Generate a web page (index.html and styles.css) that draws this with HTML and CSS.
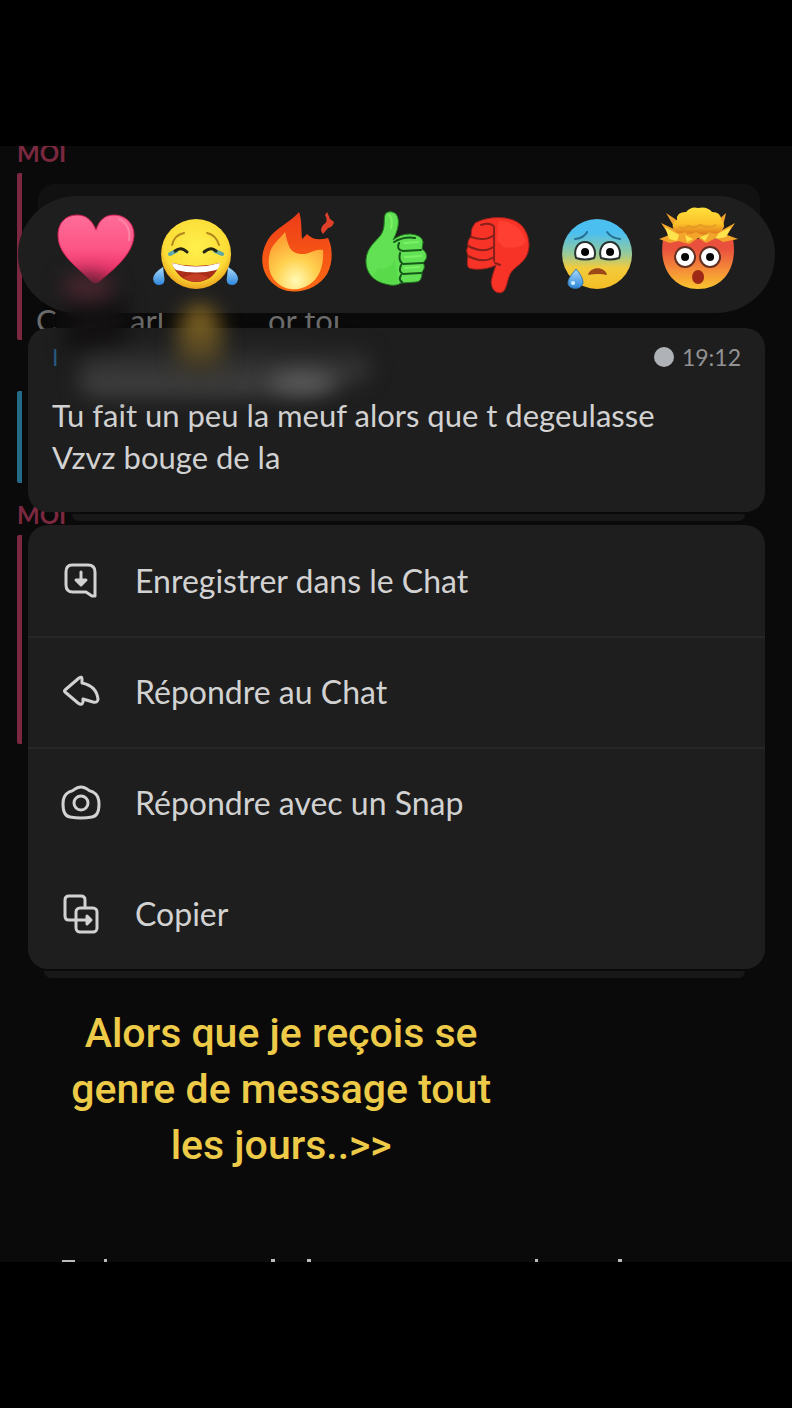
FILE: index.html
```html
<!DOCTYPE html>
<html lang="fr">
<head>
    <meta charset="UTF-8">
    <meta name="viewport" content="width=device-width, initial-scale=1">
    <title>Chat</title>
    <link rel="stylesheet" href="styles.css">
</head>
<body>
<main class="screen">
    <!-- conversation behind the menu -->
    <div class="thread">
        <h2 class="author">MOI</h2>
        <div class="rail rail_first">
            <p class="old_text"><span>C</span><span>arl</span><span>or toi</span></p>
        </div>
        <div class="rail rail_friend"></div>
        <h2 class="author">MOI</h2>
        <div class="rail rail_last"></div>
    </div>

    <div class="overlay">
        <div class="reactions">
            <button type="button" aria-label="Coeur">
                <svg viewBox="0 0 100 100">
                    <defs>
                        <linearGradient id="heart" x1="0" y1="0" x2="0" y2="1">
                            <stop offset="0" stop-color="#ff6c98"/>
                            <stop offset=".5" stop-color="#fb5585"/>
                            <stop offset="1" stop-color="#ee225f"/>
                        </linearGradient>
                    </defs>
                    <path fill="url(#heart)" stroke="#cf2357" d="M50 26C45 14 38 11 31 11C18 11 11 21 12 33C13 51 30 62 44 76Q49 82 55 76C69 64 87 50 88 31C88 19 79 11 68 11C59 11 53 16 50 26Z"/>
                    <path fill="none" stroke="#ff83a5" stroke-width="2" stroke-linecap="round" d="M73 15Q85 21 83 36"/>
                </svg>
            </button>
            <button type="button" aria-label="Mort de rire">
                <svg viewBox="0 0 100 100">
                    <defs>
                        <radialGradient id="joy" cx=".5" cy=".4" r=".6">
                            <stop offset="0" stop-color="#fff04d"/>
                            <stop offset=".75" stop-color="#fbdc36"/>
                            <stop offset="1" stop-color="#eba31e"/>
                        </radialGradient>
                        <linearGradient id="tear" x1="0" y1="0" x2="0" y2="1">
                            <stop offset="0" stop-color="#a9dcfa"/>
                            <stop offset="1" stop-color="#2e86dc"/>
                        </linearGradient>
                    </defs>
                    <circle cx="50" cy="50" r="35" fill="url(#joy)"/>
                    <path fill="none" stroke="#b3881d" stroke-width="2" stroke-linecap="round" d="M26 41Q28 31 38 29M61 29Q70 31 73 41"/>
                    <path fill="none" stroke="#62a9a6" stroke-width="4" stroke-linecap="round" d="M24 50L30 47M76 50L69 47"/>
                    <path fill="none" stroke="#252514" stroke-width="3" stroke-linecap="round" d="M29 47Q35 42 41 48M58 48Q65 42 70 47"/>
                    <path fill="#a92d18" d="M26 59Q50 65 74 59C71 70 62 78 50 78S29 70 26 59Z"/>
                    <path fill="#fff" d="M26 59Q50 66 74 59Q73 65 70 66Q50 71 30 66Q27 64 26 59Z"/>
                    <path fill="#c33e25" d="M37 74Q50 66 63 74Q50 81 37 74Z"/>
                    <path fill="url(#tear)" d="M17 63Q7 69 7 75Q8 81 13 81Q20 81 18 72ZM82 63Q92 69 92 75Q91 81 86 81Q79 81 81 72Z"/>
                </svg>
            </button>
            <button type="button" aria-label="Feu">
                <svg viewBox="0 0 100 100">
                    <defs>
                        <linearGradient id="fire" x1="0" y1="0" x2="0" y2="1">
                            <stop offset="0" stop-color="#ed3b19"/>
                            <stop offset="1" stop-color="#fc6b12"/>
                        </linearGradient>
                        <radialGradient id="flame" cx=".5" cy=".85" r=".75">
                            <stop offset="0" stop-color="#fffab5"/>
                            <stop offset=".5" stop-color="#ffd251"/>
                            <stop offset="1" stop-color="#fda334"/>
                        </radialGradient>
                    </defs>
                    <path fill="url(#fire)" d="M53 8C42 20 30 24 23 34C11 52 15 74 33 84C49 92 71 86 81 70C88 57 86 42 82 34Q68 38 61 30L56 35C55 27 56 16 53 8Z"/>
                    <path fill="url(#flame)" d="M39 28C42 42 44 49 54 50C64 51 68 44 77 46C78 66 71 81 52 85C33 87 20 72 23 53C24 41 33 36 39 28Z"/>
                    <path fill="#e0402a" d="M81 8L84 15L88 18Q87 23 82 24L77 30Q73 26 77 21Q83 18 79 11Z"/>
                </svg>
            </button>
            <button type="button" aria-label="Pouce en haut">
                <svg viewBox="0 0 100 100">
                    <path fill="#61e153" stroke="#237c20" d="M40 9Q45 6 50 10C55 17 51 28 47 36Q54 30 64 30Q76 31 77 38Q76 44 76 45Q82 49 80 55L77 59Q80 63 76 68Q76 78 70 78L55 79Q49 83 40 80C25 77 19 66 20 55C21 44 28 39 34 32C41 23 36 14 40 9Z"/>
                    <path fill="#58da4b" d="M32 64Q43 67 49 56L52 79Q37 83 27 72Z"/>
                    <path fill="none" stroke="#16571a" stroke-width="2" stroke-linecap="round" d="M48 38Q58 32 69 34M53 39Q50 46 57 47L75 46M54 49Q52 57 57 60L77 59M55 61Q52 68 57 70L75 69M55 71Q52 76 56 78"/>
                    <path fill="none" stroke="#7cf066" stroke-width="2" stroke-linecap="round" d="M43 11Q47 14 45 24M58 39L72 38M59 53L75 52M59 64L73 63"/>
                </svg>
            </button>
            <button type="button" aria-label="Pouce en bas">
                <svg viewBox="0 0 100 100">
                    <path fill="#f73327" stroke="#9e201b" d="M28 19C39 13 55 12 66 16C77 20 82 31 82 42C81 56 73 59 65 67C59 74 61 88 53 89Q45 89 44 78Q45 71 49 61C40 66 27 66 22 64Q19 62 21 52Q18 46 21 42Q20 36 24 33Q23 25 28 19Z"/>
                    <path fill="#ff3f31" d="M52 17Q72 17 79 37Q75 46 56 43L50 36Z"/>
                    <path fill="none" stroke="#86201b" stroke-width="2" stroke-linecap="round" d="M34 21Q44 18 47 23V57M24 33Q38 38 47 31M21 42Q37 50 46 43M21 52Q36 60 47 53M48 59L53 61"/>
                </svg>
            </button>
            <button type="button" aria-label="Triste">
                <svg viewBox="0 0 100 100">
                    <defs>
                        <linearGradient id="cold" x1="0" y1="0" x2="0" y2="1">
                            <stop offset=".2" stop-color="#4bbff0"/>
                            <stop offset=".5" stop-color="#98ca98"/>
                            <stop offset=".7" stop-color="#f2cb3c"/>
                            <stop offset="1" stop-color="#f5bd25"/>
                        </linearGradient>
                    </defs>
                    <circle cx="50" cy="50" r="35" fill="url(#cold)"/>
                    <path fill="none" stroke="#246f94" stroke-width="2" stroke-linecap="round" d="M28 35Q37 34 40 28M60 28Q64 34 73 35"/>
                    <g fill="#fff" stroke="#28332f" stroke-width="2">
                        <path d="M29 54C26 45 31 38 38 38S50 46 47 54Q38 57 29 54ZM54 54C51 45 56 38 63 38S75 46 72 54Q63 57 54 54Z"/>
                    </g>
                    <circle cx="38" cy="48" r="4" fill="#050505"/>
                    <circle cx="63" cy="48" r="4" fill="#050505"/>
                    <path fill="#9d4818" d="M41 71C43 62 58 62 60 71Q51 69 41 71Z"/>
                    <path fill="url(#tear)" stroke="#347cac" d="M29 65Q20 75 21 80C23 86 34 86 36 79Q36 73 29 65Z"/>
                    <circle cx="26" cy="79" r="2" fill="#d1f1ff"/>
                </svg>
            </button>
            <button type="button" aria-label="Choqué">
                <svg viewBox="0 0 100 100">
                    <defs>
                        <linearGradient id="hot" x1="0" y1="0" x2="0" y2="1">
                            <stop offset=".2" stop-color="#e9513d"/>
                            <stop offset=".6" stop-color="#f48a38"/>
                            <stop offset="1" stop-color="#fac52e"/>
                        </linearGradient>
                        <linearGradient id="blast" x1="0" y1="0" x2="0" y2="1">
                            <stop offset="0" stop-color="#ffe13b"/>
                            <stop offset=".6" stop-color="#fcc02a"/>
                            <stop offset="1" stop-color="#df7a1d"/>
                        </linearGradient>
                    </defs>
                    <path fill="url(#hot)" d="M16 35H86C91 65 75 85 51 85S11 65 16 35Z"/>
                    <path fill="#f3a42b" d="M12 35L22 31L14 19L29 26L19 9L34 19H68L79 9L75 26L88 19L80 31L91 35L76 38L69 34L59 39L51 34L42 40L31 37L23 39Z"/>
                    <path fill="#ffe34d" d="M18 23L32 31L30 37L22 35ZM84 23L72 29L68 35L79 33ZM38 31L46 35L40 38ZM62 30L58 37L53 33Z"/>
                    <path fill="url(#blast)" d="M28 27Q22 21 30 16Q29 8 39 8Q44 2 51 4Q60 2 65 8Q74 8 74 16Q80 22 74 27Q69 32 62 28Q56 33 49 28Q42 32 38 28Q32 31 28 27Z"/>
                    <path fill="none" stroke="#e79a22" stroke-width="2" d="M32 23Q37 26 41 22Q48 25 53 21Q62 25 69 21"/>
                    <circle cx="38" cy="53" r="10" fill="#fff" stroke="#622f21" stroke-width="2"/>
                    <circle cx="63" cy="53" r="10" fill="#fff" stroke="#622f21" stroke-width="2"/>
                    <circle cx="38" cy="53" r="4" fill="#070707"/>
                    <circle cx="63" cy="53" r="4" fill="#070707"/>
                    <ellipse cx="51" cy="73" rx="6" ry="7" fill="#9d2916"/>
                </svg>
            </button>
        </div>

        <article class="message">
            <header class="message_head">
                <span class="friend">I</span>
                <span class="status"></span>
                <time>19:12</time>
            </header>
            <p>Tu fait un peu la meuf alors que t degeulasse<br>Vzvz bouge de la</p>
        </article>

        <div class="menu">
            <button type="button">
                <svg viewBox="0 0 40 40">
                    <path d="M11 4H27Q34 4 34 11V35H31L25 31H12Q5 31 5 24V11Q5 4 11 4Z"/>
                    <path d="M20 11V23M15 19L20 24L25 19Z"/>
                </svg>
                <span>Enregistrer dans le Chat</span>
            </button>
            <button type="button">
                <svg viewBox="0 0 40 40">
                    <path d="M4 18L18 6Q21 4 21 7V11C31 13 36 19 37 27Q37 31 32 30L22 27V30Q21 34 17 31L4 20Q3 19 4 18Z"/>
                </svg>
                <span>Répondre au Chat</span>
            </button>
            <button type="button">
                <svg viewBox="0 0 40 40">
                    <path d="M8 9Q12 8 14 6Q20 2 26 6Q28 8 32 9Q38 12 38 21Q38 33 31 34Q20 36 9 34Q2 33 2 21Q2 12 8 9Z"/>
                    <circle cx="20" cy="20" r="7"/>
                </svg>
                <span>Répondre avec un Snap</span>
            </button>
            <button type="button">
                <svg viewBox="0 0 40 40">
                    <path d="M15 26H8Q4 26 4 22V6Q4 2 8 2H20Q24 2 24 6V13"/>
                    <rect x="15" y="14" width="21" height="24" rx="4"/>
                    <path d="M15 26H29M26 22L30 26L26 30Z"/>
                </svg>
                <span>Copier</span>
            </button>
        </div>
    </div>

    <p class="caption">Alors que je reçois se<br>genre de message tout<br>les jours..&gt;&gt;</p>

    <!-- top of the next line, cut by the edge -->
    <svg class="next_line" viewBox="0 0 792 4" preserveAspectRatio="none">
        <path d="M62 2H75V4H62ZM104 1H107V4H104ZM271 1H275V4H271ZM307 1H311V4H307ZM535 1H538V4H535ZM618 1H622V4H618Z"/>
    </svg>

    <div class="smudge smudge_dark"></div>
    <div class="smudge smudge_pink"></div>
    <div class="smudge smudge_name"></div>
    <div class="smudge smudge_bright"></div>
    <div class="smudge smudge_yellow"></div>
</main>
</body>
</html>
```
FILE: styles.css
```css
body,h2,p{ margin:0; padding:0;}

body{
    background-color: #000;
    color: #d2d2d2;
    font-family: Lato, "Liberation Sans", sans-serif;
}
button{
    border: 0 none;
    padding: 0;
    background: none;
    color: inherit;
    font: inherit;
    cursor: pointer;
}
svg{ display:block;}

.screen{
    position: relative;
    margin: 146px 0;
    background-color: #0a0a0a;
    overflow: hidden;
}

/* conversation */
.thread{
    position: absolute;
    top: -6px;
    left: 17px;
    right: 17px;
}
.author{
    height: 33px;
    line-height: 26px;
    font-size: 24px;
    font-weight: bold;
    color: #7c2840;
}
.rail{
    border-left: 5px solid #7c2840;
    border-radius: 2px;
}
.rail_first{
    height: 167px;
    display: flex;
    align-items: flex-end;
}
.rail_friend{
    height: 92px;
    margin: 51px 0 19px;
    border-color: #236b87;
}
.rail_last{ height:209px;}
.old_text{
    display: grid;
    grid-template-columns: 94px 138px auto;
    padding-left: 14px;
    font-size: 31px;
    line-height: 40px;
    color: #6c6c6c;
}

/* reactions */
.overlay{
    position: relative;
    padding: 50px 27px 0 28px;
}
.overlay:before{
    content: "";
    position: absolute;
    top: 38px;
    left: 38px;
    right: 32px;
    height: 60px;
    border-radius: 16px;
    background-color: #111;
}
.reactions{
    position: relative;
    display: flex;
    margin: 0 -10px 15px;
    padding: 8px 28px 9px;
    border-radius: 60px;
    background-color: #1e1e1e;
}
.reactions button{ flex:1;}
.reactions svg{
    width: 100%;
    height: 100px;
}

/* message */
.message{
    position: relative;
    margin-bottom: 13px;
    padding: 18px 24px 34px;
    border-radius: 20px;
    background-color: #1e1e1e;
    font-size: 31px;
    line-height: 42px;
}
.message:after,
.menu:after{
    content: "";
    position: absolute;
    left: 44px;
    right: 20px;
    bottom: -9px;
    height: 7px;
    border-radius: 0 0 8px 8px;
    background-color: #181818;
}
.menu:after{ left:16px;}
.message_head{
    display: flex;
    align-items: center;
    gap: 8px;
    margin-bottom: 26px;
    font-size: 23px;
    line-height: 22px;
    color: #929292;
}
.friend{
    margin-right: auto;
    color: #285c83;
}
.status{
    width: 20px;
    height: 20px;
    border-radius: 50%;
    background-color: #afb3b7;
}

/* menu */
.menu{
    position: relative;
    border-radius: 20px;
    background-color: #1e1e1e;
}
.menu button{
    display: flex;
    align-items: center;
    gap: 34px;
    width: 100%;
    height: 111px;
    padding-left: 33px;
    font-size: 32px;
    text-align: left;
}
.menu button:nth-child(2),
.menu button:nth-child(3){ box-shadow:inset 0 2px #272727;}
.menu svg{
    width: 40px;
    height: 40px;
    fill: none;
    stroke: #d2d2d2;
    stroke-width: 3;
    stroke-linecap: round;
    stroke-linejoin: round;
}

.caption{
    width: 71%;
    margin: 36px 0 85px;
    font-family: Roboto, "Liberation Sans", sans-serif;
    font-size: 41px;
    font-weight: 500;
    line-height: 56px;
    text-align: center;
    color: #edca48;
}
.next_line{
    width: 100%;
    height: 4px;
    fill: #bbb;
}

/* smeared name */
.smudge{
    position: absolute;
    filter: blur(10px);
    pointer-events: none;
}
.smudge_dark{
    top: 150px;
    left: 66px;
    width: 60px;
    height: 56px;
    background-color: #131112;
}
.smudge_pink{
    top: 128px;
    left: 62px;
    width: 52px;
    height: 26px;
    border-radius: 50%;
    background-color: #4a2630;
}
.smudge_name{
    top: 200px;
    left: 80px;
    width: 290px;
    height: 50px;
    border-radius: 30% 20% 50% 10%;
    background: linear-gradient(#242424, #464646);
}
.smudge_bright{
    top: 226px;
    left: 270px;
    width: 65px;
    height: 22px;
    border-radius: 50%;
    background-color: #5c5c5c;
}
.smudge_yellow{
    top: 158px;
    left: 178px;
    width: 44px;
    height: 68px;
    border-radius: 50% 50% 20% 20%;
    background: linear-gradient(#8a6a20, #5e4c22 60%, #3a3528);
}
```
